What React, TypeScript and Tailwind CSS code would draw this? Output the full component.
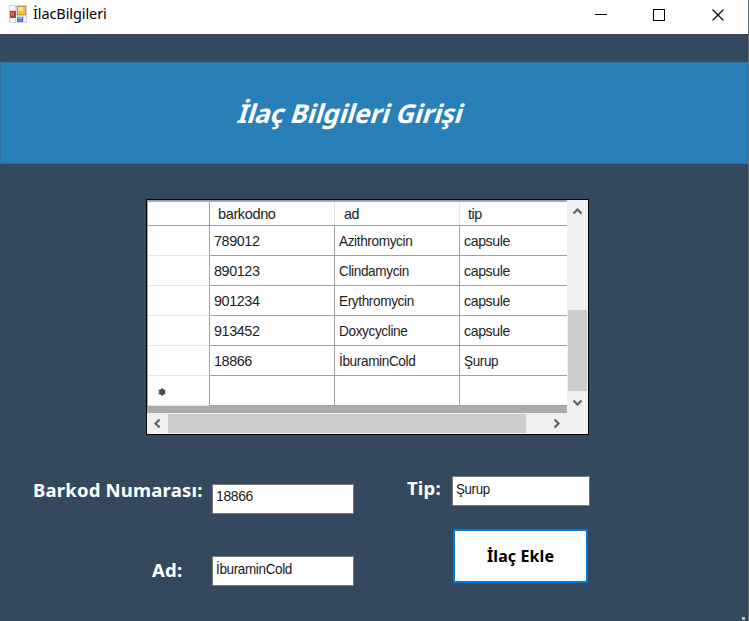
import React from "react";

const rows = [
  { barkodno: "789012", ad: "Azithromycin", tip: "capsule" },
  { barkodno: "890123", ad: "Clindamycin", tip: "capsule" },
  { barkodno: "901234", ad: "Erythromycin", tip: "capsule" },
  { barkodno: "913452", ad: "Doxycycline", tip: "capsule" },
  { barkodno: "18866", ad: "İburaminCold", tip: "Şurup" },
  { barkodno: "", ad: "", tip: "" },
];

function AppIcon() {
  return (
    <svg width="18" height="18" viewBox="0 0 18 18" className="shrink-0">
      <rect width="18" height="18" fill="#d3d5d8" />
      <path d="M1 1h5v4H1zM1 13h5v4H1zM7 11h1v6H7zM15 11h2v6h-2z" fill="#f6f6f7" />
      <rect x="1" y="6" width="6" height="7" fill="#b5403a" />
      <rect x="2" y="7" width="3" height="4" fill="#d4615a" />
      <rect x="8.5" y="1.5" width="8" height="8" fill="#f4c534" stroke="#c39a2c" />
      <rect x="9" y="2" width="5" height="4" fill="#ffe38a" />
      <rect x="8" y="12" width="6" height="5" fill="#4a80d8" />
      <rect x="9" y="12" width="4" height="2" fill="#86b4f5" />
    </svg>
  );
}

function Chevron({ d }: { d: string }) {
  return (
    <svg width="11" height="11" viewBox="0 0 11 11" className="block">
      <path d={d} fill="none" stroke="#606060" strokeWidth="2.2" />
    </svg>
  );
}

function Field({ value, className, textClass }: { value: string; className: string; textClass: string }) {
  return (
    <div
      className={`h-[30px] border border-[#7a7a7a] bg-white pl-[3px] font-['Liberation_Sans',sans-serif] text-[15px] font-normal leading-[22px] tracking-[-0.4px] text-[#1a1a1a] ${className}`}
    >
      <span className={`inline-block origin-left ${textClass}`}>{value}</span>
    </div>
  );
}

export default function App() {
  return (
    <div className="relative flex h-[621px] w-[749px] overflow-hidden bg-[#34495e] font-['Liberation_Sans',sans-serif]">
      <div className="flex h-full w-[748px] flex-col">
        <header className="flex h-[34px] shrink-0 items-start bg-white text-black">
          <div className="flex items-center gap-[6px] pl-[9px] pt-[5px]">
            <AppIcon />
            <span className="-mt-[2px] font-['Noto_Sans',sans-serif] text-[14.5px] leading-[20px] tracking-[-0.1px]">İlacBilgileri</span>
          </div>
          <svg width="130" height="14" viewBox="0 0 130 14" className="ml-auto mr-[23px] mt-[8px] block" fill="none" stroke="#000">
            <path d="M0 6.5h12M58.5 1.5h11v11h-11z" shapeRendering="crispEdges" />
            <path d="M117.5 1.5l11 11M128.5 1.5l-11 11" strokeWidth="1.1" />
          </svg>
        </header>

        <div className="mt-[28px] flex h-[102px] shrink-0 items-center border border-[#2f6d9b] bg-[#2980b9] pl-[238px]">
          <h1 className="-skew-x-[17deg] font-['Noto_Sans',sans-serif] text-[26px] font-bold leading-[36px] tracking-[-0.1px] text-white">
            İlaç Bilgileri Girişi
          </h1>
        </div>

        <section className="ml-[146px] mt-[35px] flex h-[236px] w-[443px] shrink-0 flex-col border border-black bg-[#f0f0f0]">
          <div className="flex h-[213px]">
            <div className="flex w-[420px] flex-col border-l border-t border-[#a0a0a0] bg-[#ababab] text-[15px] tracking-[-0.4px] text-[#222]">
              <div className="mt-px flex h-[24px] shrink-0 border-b border-[#a0a0a0] bg-white leading-[23px]">
                <div className="w-[62px] border-r border-[#a0a0a0]" />
                <div className="w-[125px] border-r border-[#e5e5e5] pl-[8px]">
                  <span className="inline-block origin-left scale-x-[0.97]">barkodno</span>
                </div>
                <div className="w-[125px] border-r border-[#e5e5e5] pl-[9px]">
                  <span className="inline-block origin-left scale-x-[0.95]">ad</span>
                </div>
                <div className="flex-1 pl-[8px]">
                  <span className="inline-block origin-left scale-x-[0.95]">tip</span>
                </div>
              </div>
              {rows.map((r, i) => (
                <div key={i} className="flex h-[30px] shrink-0 bg-white leading-[30px]">
                  <div className="flex w-[62px] items-center border-b border-r border-b-[#e5e5e5] border-r-[#a0a0a0] pl-[10px]">
                    {i === rows.length - 1 && (
                      <svg width="8" height="8" viewBox="0 0 8 8" className="mt-[3px]">
                        <path d="M4 0v8M0.5 2l7 4M0.5 6l7-4" stroke="#606060" strokeWidth="1.3" />
                        <circle cx="4" cy="4" r="2.9" fill="#484848" />
                      </svg>
                    )}
                  </div>
                  <div className="w-[125px] border-b border-r border-[#a0a0a0] pl-[4px]">
                    <span className="inline-block origin-left scale-x-[0.955]">{r.barkodno}</span>
                  </div>
                  <div className="w-[125px] border-b border-r border-[#a0a0a0] pl-[4px]">
                    <span className="inline-block origin-left scale-x-[0.905]">{r.ad}</span>
                  </div>
                  <div className="flex-1 border-b border-[#a0a0a0] pl-[4px]">
                    <span className={`inline-block origin-left ${r.tip === "Şurup" ? "scale-x-[0.9]" : "scale-x-[0.94]"}`}>{r.tip}</span>
                  </div>
                </div>
              ))}
            </div>
            <div className="ml-px flex w-[19px] flex-col items-center justify-between">
              <div className="flex h-[22px] items-center"><Chevron d="M1.5 7.5l4-4 4 4" /></div>
              <div className="mt-auto h-[81px] w-full bg-[#cdcdcd]" />
              <div className="flex h-[22px] items-center"><Chevron d="M1.5 3.5l4 4 4-4" /></div>
            </div>
          </div>
          <div className="flex h-[20px] items-center">
            <div className="flex w-[21px] justify-center"><Chevron d="M7.5 1.5l-4 4 4 4" /></div>
            <div className="h-[19px] w-[358px] bg-[#cdcdcd]" />
            <div className="ml-[25px]"><Chevron d="M3.5 1.5l4 4-4 4" /></div>
          </div>
        </section>

        <section className="flex pl-[33px] pt-[41px] font-['Noto_Sans',sans-serif] text-[18.5px] font-bold leading-[26px] tracking-[0.2px] text-white">
          <div className="flex w-[373px] flex-col gap-[42px]">
            <div className="flex h-[38px] items-start">
              <span className="w-[179px] whitespace-nowrap pt-[1px]">Barkod Numarası:</span>
              <Field value="18866" className="mt-[8px] w-[142px]" textClass="scale-x-[0.93]" />
            </div>
            <div className="flex items-start">
              <span className="w-[179px] pl-[119px] pt-[1px]">Ad:</span>
              <Field value="İburaminCold" className="w-[142px] pt-px" textClass="scale-x-[0.9]" />
            </div>
          </div>
          <div className="flex flex-col">
            <div className="flex items-start">
              <span className="-mt-px w-[46px] pl-px">Tip:</span>
              <Field value="Şurup" className="w-[138px] pt-px" textClass="scale-x-[0.89]" />
            </div>
            <button className="ml-[47px] mt-[23px] h-[54px] w-[135px] border-2 border-[#0078d7] bg-white pb-px text-[16px] font-bold tracking-[0.1px] text-black">
              İlaç Ekle
            </button>
          </div>
        </section>
      </div>
      <div className="h-full w-px bg-[#656d75]" />
      <div className="absolute bottom-px right-[4px] h-[3px] w-[3px] bg-[#bfc3c6]" />
    </div>
  );
}
